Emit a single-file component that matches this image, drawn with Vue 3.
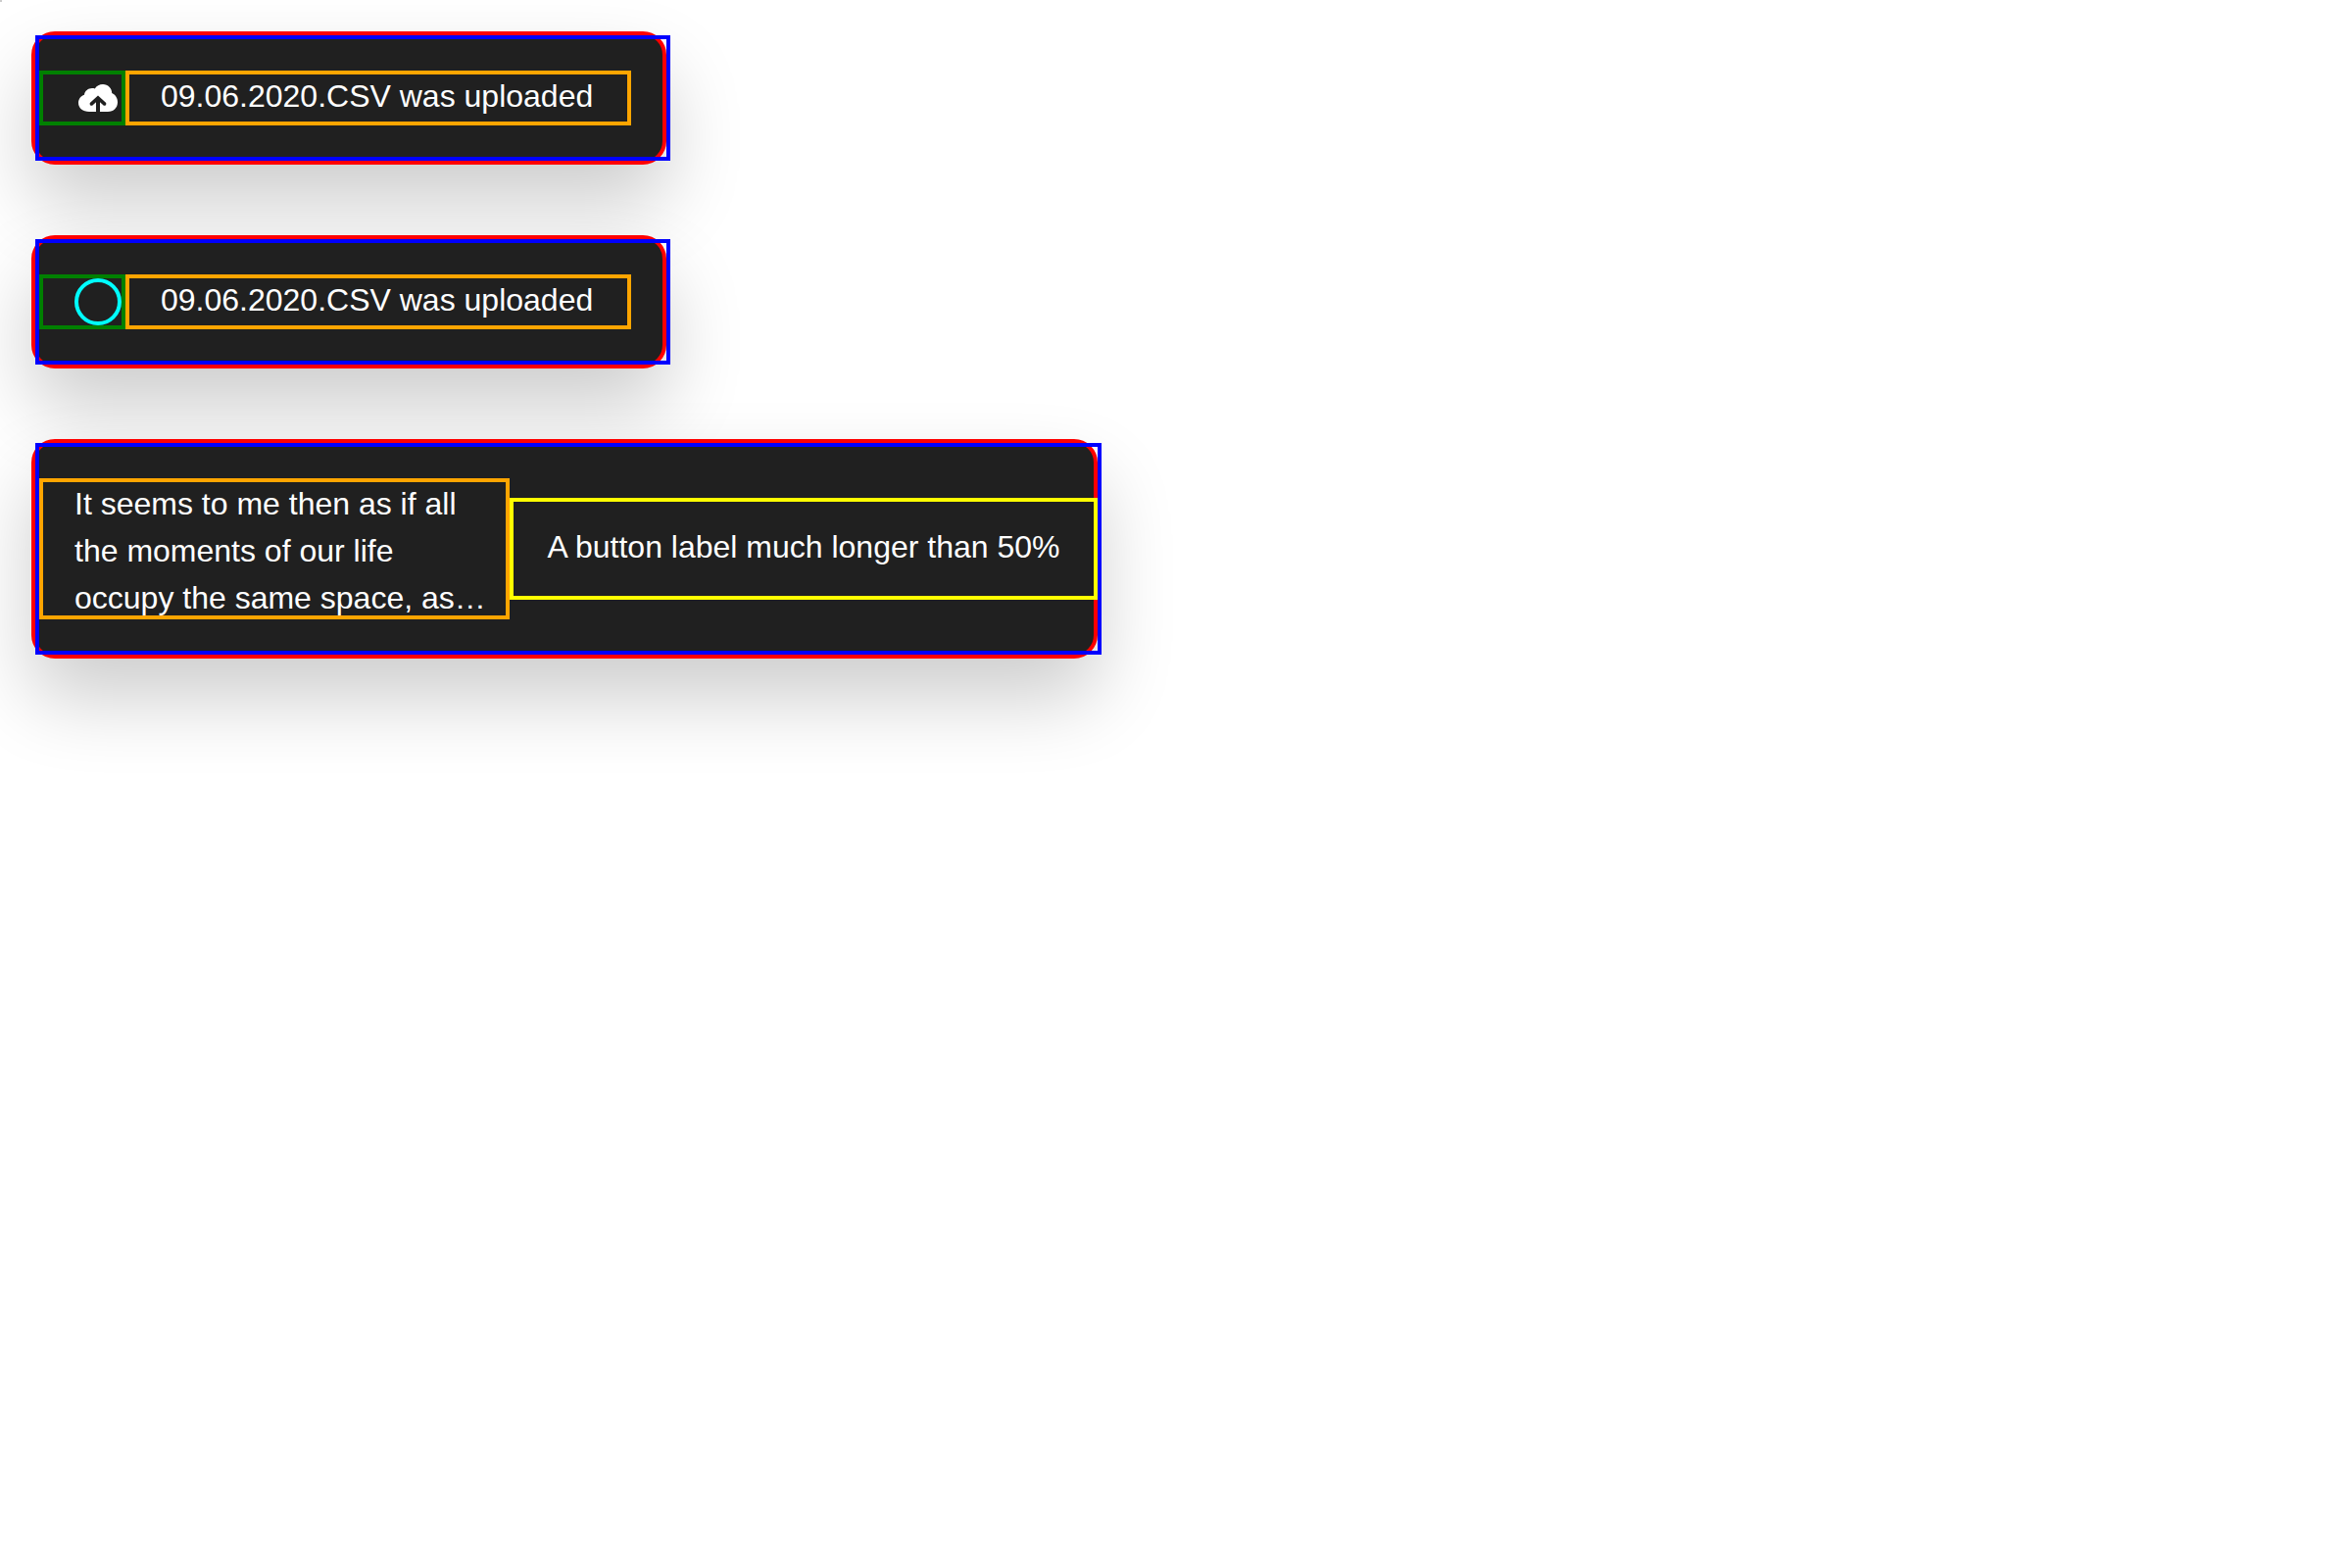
<script setup>
const uploads = [
  { id: 'icon', kind: 'cloud', text: '09.06.2020.CSV was uploaded' },
  { id: 'ring', kind: 'ring', text: '09.06.2020.CSV was uploaded' },
]
const longMessage =
  'It seems to me then as if all the moments of our life occupy the same space, as…'
</script>

<template>
  <main class="stage">
    <section v-for="item in uploads" :key="item.id" class="toast" role="status">
      <div class="toast-body padded">
        <div class="toast-icon">
          <svg v-if="item.kind === 'cloud'" class="glyph" viewBox="0 0 48 48" aria-hidden="true">
            <path
              fill="#fff"
              d="M15 38C8.500 38 4 34.200 4 29C4 25 6.500 21.700 10 20.700C10.500 16.800 14 14 18 14C19 14 20 14.200 20.800 14.400C22.500 11.700 25.500 10 29 10C34.200 10 38.200 14 38.200 19C41.800 20.700 44 24.200 44 28.200C44 33.800 40 38 34 38H26V28.200L29.300 31.300C30.100 32 31.200 32 31.900 31.200C32.600 30.500 32.500 29.300 31.700 28.600L24 21.600L16.300 28.600C15.500 29.300 15.400 30.500 16.100 31.200C16.800 32 17.900 32 18.700 31.300L22 28.200V38Z"
            />
          </svg>
          <span v-else class="ring"></span>
        </div>
        <div class="toast-text">{{ item.text }}</div>
      </div>
    </section>

    <section class="toast" role="status">
      <div class="toast-body">
        <div class="toast-text clamped">
          <p class="lines">{{ longMessage }}</p>
        </div>
        <button type="button" class="toast-action">A button label much longer than 50%</button>
      </div>
    </section>
  </main>
</template>

<style>
body {
  margin: 0;
  background: #fff;
}
</style>

<style scoped>
.stage {
  position: relative;
  box-sizing: border-box;
  display: flex;
  flex-direction: column;
  align-items: flex-start;
  gap: 72px;
  min-height: 100vh;
  padding: 32px;
  font-family: "Liberation Sans", Arial, sans-serif;
  font-size: 32px;
  line-height: 44px;
  color: #fff;
}

.stage::before {
  content: "";
  position: absolute;
  top: 0;
  left: 0;
  width: 2px;
  height: 2px;
  background: #ccc;
}

.toast {
  border: 4px solid #f00;
  border-radius: 24px;
  background: #202020;
  box-shadow: 0 40px 80px rgba(0, 0, 0, 0.2);
}

/* The outline is as wide as the card's outer edge, so it runs past it on the right. */
.toast-body {
  display: flex;
  align-items: center;
  margin-right: -8px;
  padding: 32px 0;
  border: 4px solid #00f;
}

.padded {
  padding-right: 36px;
}

.toast-icon {
  display: flex;
  padding-left: 32px;
  border: 4px solid #008000;
}

.glyph {
  width: 48px;
  height: 48px;
}

.ring {
  box-sizing: border-box;
  width: 48px;
  height: 48px;
  border: 4px solid #0ff;
  border-radius: 50%;
}

.toast-text {
  box-sizing: border-box;
  width: 516px;
  padding: 0 32px 4px;
  border: 4px solid #ffa500;
}

.clamped {
  width: 480px;
  height: 144px;
  padding: 0 12px 0 32px;
  overflow: hidden;
  line-height: 48px;
}

.lines {
  margin: -2px 0 0;
}

.toast-action {
  box-sizing: border-box;
  width: 600px;
  padding: 24px 0 28px;
  border: 4px solid #ff0;
  background: transparent;
  color: inherit;
  font: inherit;
  white-space: nowrap;
}
</style>
